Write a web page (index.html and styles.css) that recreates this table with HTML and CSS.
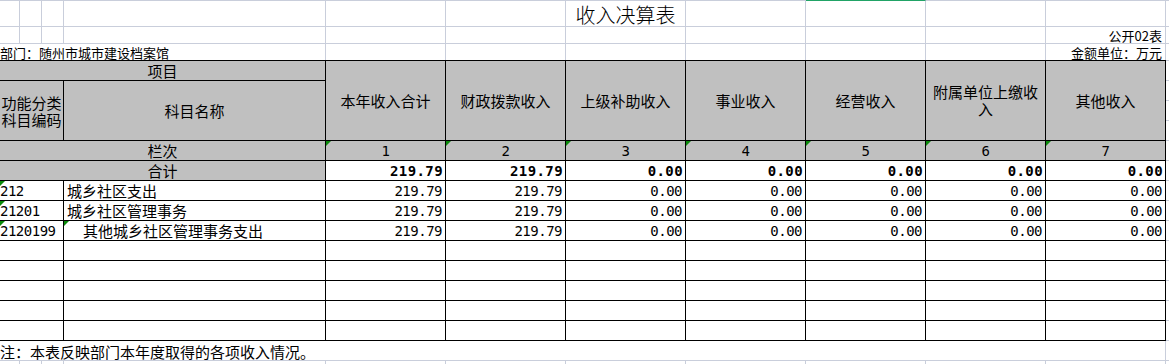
FILE: index.html
```html
<!DOCTYPE html>
<html lang="zh-CN">
<head>
<meta charset="utf-8">
<title>收入决算表</title>
<link rel="stylesheet" href="styles.css">
</head>
<body>
<div class="sheet">
  <div class="top">
    <div class="g r1"></div><div class="g r1"></div><div class="g r1"></div><div class="g r1"></div>
    <div class="g r1"></div><div class="g r1"></div><div class="g r1 title">收入决算表</div><div class="g r1"></div>
    <div class="g r1 sel"></div><div class="g r1"></div><div class="g r1"></div><div class="g r1 last"></div>

    <div class="g r2"></div><div class="g r2"></div><div class="g r2"></div><div class="g r2"></div>
    <div class="g r2"></div><div class="g r2"></div><div class="g r2"></div><div class="g r2"></div>
    <div class="g r2"></div><div class="g r2"></div><div class="g r2 right">公开02表</div><div class="g r2 last"></div>

    <div class="g r3 dept">部门：随州市城市建设档案馆</div>
    <div class="g r3"></div><div class="g r3"></div><div class="g r3"></div>
    <div class="g r3"></div><div class="g r3"></div><div class="g r3"></div>
    <div class="g r3 right">金额单位：万元</div><div class="g r3 last"></div>
  </div>

  <div class="main">
    <div class="tbl">
      <div class="c hd span2">项目</div>
      <div class="c hd tall">本年收入合计</div>
      <div class="c hd tall">财政拨款收入</div>
      <div class="c hd tall">上级补助收入</div>
      <div class="c hd tall">事业收入</div>
      <div class="c hd tall">经营收入</div>
      <div class="c hd tall">附属单位上缴收入</div>
      <div class="c hd tall">其他收入</div>
      <div class="c hd wrap">功能分类科目编码</div>
      <div class="c hd">科目名称</div>

      <div class="c hd span2">栏次</div>
      <div class="c hd num mark">1</div>
      <div class="c hd num mark">2</div>
      <div class="c hd num mark">3</div>
      <div class="c hd num mark">4</div>
      <div class="c hd num mark">5</div>
      <div class="c hd num mark">6</div>
      <div class="c hd num mark">7</div>

      <div class="c hd span2">合计</div>
      <div class="c val bold">219.79</div>
      <div class="c val bold">219.79</div>
      <div class="c val bold">0.00</div>
      <div class="c val bold">0.00</div>
      <div class="c val bold">0.00</div>
      <div class="c val bold">0.00</div>
      <div class="c val bold">0.00</div>

      <div class="c code mark">212</div>
      <div class="c name">城乡社区支出</div>
      <div class="c val">219.79</div>
      <div class="c val">219.79</div>
      <div class="c val">0.00</div>
      <div class="c val">0.00</div>
      <div class="c val">0.00</div>
      <div class="c val">0.00</div>
      <div class="c val">0.00</div>

      <div class="c code mark">21201</div>
      <div class="c name">城乡社区管理事务</div>
      <div class="c val">219.79</div>
      <div class="c val">219.79</div>
      <div class="c val">0.00</div>
      <div class="c val">0.00</div>
      <div class="c val">0.00</div>
      <div class="c val">0.00</div>
      <div class="c val">0.00</div>

      <div class="c code mark">2120199</div>
      <div class="c name sub mark">其他城乡社区管理事务支出</div>
      <div class="c val">219.79</div>
      <div class="c val">219.79</div>
      <div class="c val">0.00</div>
      <div class="c val">0.00</div>
      <div class="c val">0.00</div>
      <div class="c val">0.00</div>
      <div class="c val">0.00</div>

      <div class="c"></div><div class="c"></div><div class="c"></div><div class="c"></div><div class="c"></div><div class="c"></div><div class="c"></div><div class="c"></div><div class="c"></div>
      <div class="c"></div><div class="c"></div><div class="c"></div><div class="c"></div><div class="c"></div><div class="c"></div><div class="c"></div><div class="c"></div><div class="c"></div>
      <div class="c"></div><div class="c"></div><div class="c"></div><div class="c"></div><div class="c"></div><div class="c"></div><div class="c"></div><div class="c"></div><div class="c"></div>
      <div class="c"></div><div class="c"></div><div class="c"></div><div class="c"></div><div class="c"></div><div class="c"></div><div class="c"></div><div class="c"></div><div class="c"></div>
      <div class="c"></div><div class="c"></div><div class="c"></div><div class="c"></div><div class="c"></div><div class="c"></div><div class="c"></div><div class="c"></div><div class="c"></div>
    </div>
    <div class="strip"></div>
  </div>

  <div class="bottom">
    <div class="g note">注：本表反映部门本年度取得的各项收入情况。</div>
    <div class="g last"></div>
    <div class="g"></div><div class="g"></div><div class="g"></div><div class="g"></div>
    <div class="g"></div><div class="g"></div><div class="g"></div><div class="g"></div>
    <div class="g"></div><div class="g"></div><div class="g"></div><div class="g last"></div>
  </div>
</div>
</body>
</html>
```

FILE: styles.css
```css
html, body {
  margin: 0;
  padding: 0;
  background: #ffffff;
  overflow: hidden;
}

body {
  font-family: "Noto Sans CJK SC", "Noto Sans", sans-serif;
  color: #000000;
}

.sheet {
  width: 1169px;
  height: 364px;
  overflow: hidden;
}

/* ---------- plain spreadsheet grid (top & bottom) ---------- */
.top,
.bottom {
  display: grid;
  grid-template-columns: 20px 22px 22px 262px repeat(7, 120px) 3px;
}

.top {
  grid-template-rows: 27px 17px 16px;
}

.bottom {
  grid-template-rows: 20px 20px;
}

.g {
  box-sizing: border-box;
  border-right: 1px solid #c9cedb;
  border-bottom: 1px solid #c9cedb;
  display: flex;
  align-items: center;
  white-space: nowrap;
  font-size: 13px;
  line-height: 15px;
}

.g.last {
  border-right: none;
}

.r1 {
  border-top: 1px solid #c9cedb;
}

.r1.sel {
  border-top-color: #21a366;
}

.r3 {
  border-bottom: none;
}

.title {
  justify-content: center;
  font-size: 20px;
  line-height: 22px;
  padding-top: 2px;
  font-weight: 300;
}

.right {
  justify-content: flex-end;
  padding-right: 3px;
}

.dept {
  grid-column: 1 / 5;
  padding-top: 1px;
}

.note {
  grid-column: 1 / 12;
  font-size: 15px;
  line-height: 17px;
  padding-top: 1px;
}

/* ---------- report table ---------- */
.main {
  display: flex;
}

.tbl {
  display: grid;
  grid-template-columns: 64px 262px repeat(7, 120px);
  grid-template-rows: 20px 60px;
  grid-auto-rows: 20px;
  border-top: 1px solid #000000;
}

.strip {
  width: 3px;
  background: repeating-linear-gradient(to bottom, #c9cedb 0, #c9cedb 1px, transparent 1px, transparent 20px);
}

.c {
  position: relative;
  box-sizing: border-box;
  border-right: 1px solid #000000;
  border-bottom: 1px solid #000000;
  display: flex;
  align-items: center;
  font-size: 15px;
  line-height: 17px;
  white-space: nowrap;
  overflow: hidden;
}

.hd {
  background: #c0c0c0;
  justify-content: center;
  text-align: center;
}

.span2 {
  grid-column: span 2;
}

.tall {
  grid-row: span 2;
  white-space: normal;
  padding-bottom: 1px;
}

.wrap {
  white-space: normal;
}

.num,
.val,
.code {
  font-family: "DejaVu Sans Mono", "Liberation Mono", monospace;
  font-size: 14px;
  letter-spacing: -0.5px;
  padding-top: 1px;
}

.val {
  justify-content: flex-end;
  padding-right: 3px;
}

.val.bold {
  font-weight: bold;
  letter-spacing: 0.4px;
  padding-right: 2px;
}

.code {
  padding-left: 0;
}

.name {
  padding-left: 3px;
}

.name.sub {
  padding-left: 19px;
}

.mark::before {
  content: "";
  position: absolute;
  left: 0;
  top: 0;
  width: 0;
  height: 0;
  border-top: 5px solid #0a8a0a;
  border-right: 5px solid transparent;
}
```
